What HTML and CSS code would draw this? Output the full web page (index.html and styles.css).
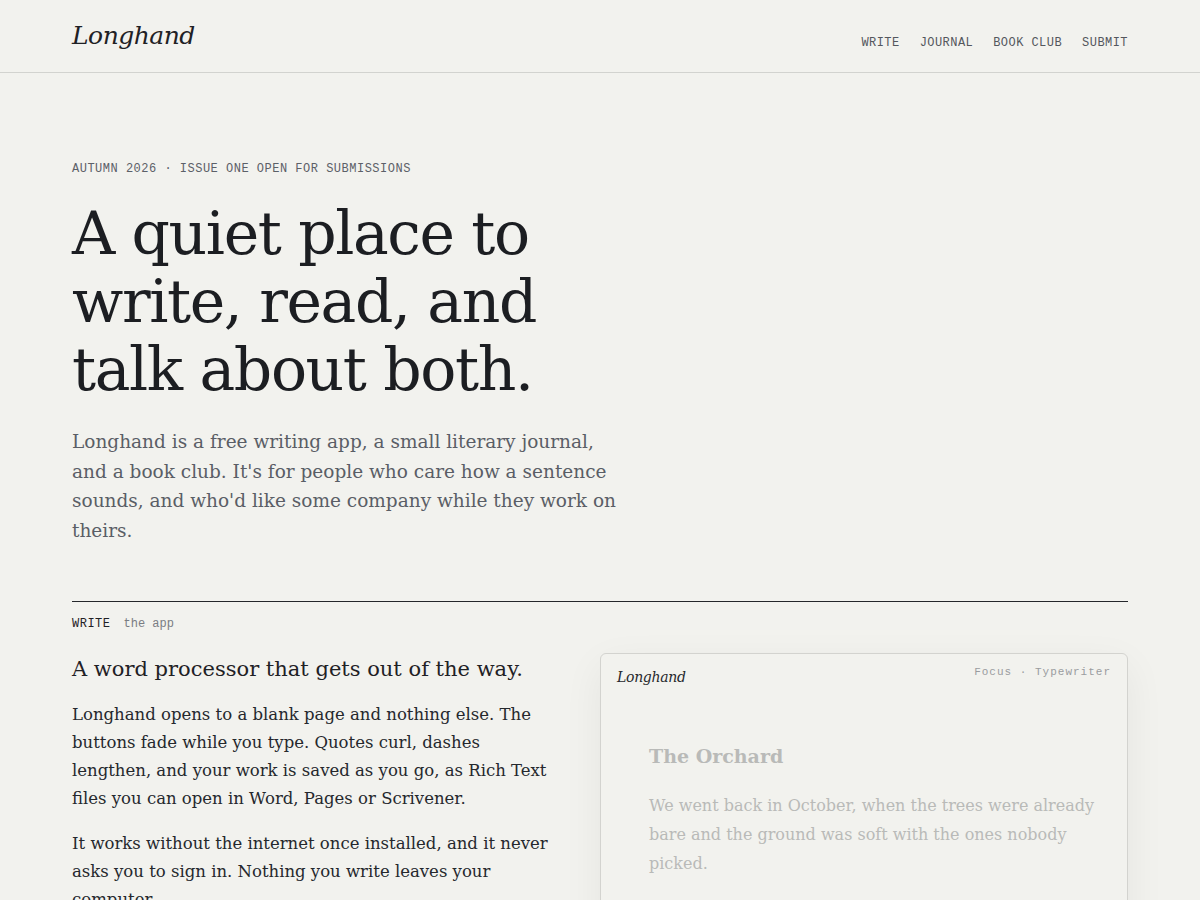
FILE: index.html
```html
<!DOCTYPE html>
<html lang="en">
<head>
<meta charset="utf-8">
<title>Longhand</title>
<link rel="stylesheet" href="styles.css">
</head>
<body>
<header class="site-header">
  <div class="wrap header-inner">
    <a class="logo" href="#">Longhand</a>
    <nav class="nav">
      <a href="#">Write</a>
      <a href="#">Journal</a>
      <a href="#">Book club</a>
      <a href="#">Submit</a>
    </nav>
  </div>
</header>
<main class="wrap">
  <section class="hero">
    <p class="eyebrow">Autumn 2026 · Issue one open for submissions</p>
    <h1 class="hero-title">A quiet place to write, read, and talk about both.</h1>
    <p class="hero-lede">Longhand is a free writing app, a small literary journal, and a book club. It's for people who care how a sentence sounds, and who'd like some company while they work on theirs.</p>
  </section>
  <section class="section">
    <div class="section-label"><span class="label-main">Write</span><span class="label-sub">the app</span></div>
    <div class="section-grid">
      <div class="section-copy">
        <h2 class="section-title">A word processor that gets out of the way.</h2>
        <p>Longhand opens to a blank page and nothing else. The buttons fade while you type. Quotes curl, dashes lengthen, and your work is saved as you go, as Rich Text files you can open in Word, Pages or Scrivener.</p>
        <p>It works without the internet once installed, and it never asks you to sign in. Nothing you write leaves your computer.</p>
      </div>
      <div class="app-card">
        <div class="app-bar">
          <span class="app-logo">Longhand</span>
          <span class="app-modes">Focus · Typewriter</span>
        </div>
        <div class="app-page">
          <h3 class="doc-title">The Orchard</h3>
          <p class="doc-text">We went back in October, when the trees were already bare and the ground was soft with the ones nobody picked.</p>
        </div>
      </div>
    </div>
  </section>
</main>
</body>
</html>
```
FILE: styles.css
```css
* { box-sizing: border-box; }
html, body { margin: 0; padding: 0; }
body {
  background: #f2f2ee;
  color: #1f2125;
  font-family: "DejaVu Serif", "Liberation Serif", serif;
}
a { color: inherit; text-decoration: none; }
.wrap { max-width: 1056px; margin: 0 auto; }

.site-header { border-bottom: 1px solid #d2d3cf; }
.header-inner {
  height: 72px;
  display: flex;
  align-items: center;
  justify-content: space-between;
}
.logo {
  font-style: italic;
  font-size: 25px;
  letter-spacing: -0.5px;
  color: #1f2125;
  margin-top: -1px;
}
.nav { display: flex; gap: 20px; margin-top: 14px; }
.nav a {
  font-family: "Liberation Mono", "DejaVu Sans Mono", monospace;
  font-size: 12px;
  letter-spacing: 0.45px;
  text-transform: uppercase;
  color: #54575d;
}

.hero { padding-top: 88px; }
.eyebrow {
  margin: 0;
  font-family: "Liberation Mono", "DejaVu Sans Mono", monospace;
  font-size: 12px;
  line-height: 16px;
  letter-spacing: 0.5px;
  text-transform: uppercase;
  color: #5c6068;
}
.hero-title {
  margin: 22px 0 0;
  font-weight: 400;
  font-size: 60px;
  line-height: 68px;
  letter-spacing: -1.4px;
  max-width: 560px;
  color: #1c1e22;
}
.hero-lede {
  margin: 24px 0 0;
  max-width: 550px;
  font-size: 18.5px;
  line-height: 29.5px;
  color: #5a5e66;
}

.section {
  margin-top: 56px;
  border-top: 1px solid #25272b;
}
.section-label {
  display: flex;
  align-items: baseline;
  gap: 13px;
  padding-top: 15px;
  font-family: "Liberation Mono", "DejaVu Sans Mono", monospace;
}
.label-main {
  font-size: 12px;
  letter-spacing: 0.5px;
  text-transform: uppercase;
  color: #1f2125;
}
.label-sub { font-size: 12px; color: #7a7d83; }

.section-grid {
  display: grid;
  grid-template-columns: 1fr 1fr;
  margin-top: 22px;
}
.section-copy { padding-right: 48px; }
.section-title {
  margin: 0;
  font-weight: 400;
  font-size: 21px;
  line-height: 32px;
  color: #1f2125;
}
.section-copy p {
  margin: 16px 0 0;
  font-size: 16.5px;
  line-height: 28px;
  color: #25282d;
}
.section-copy p + p { margin-top: 17px; }

.app-card {
  border: 1px solid #d3d3cf;
  border-radius: 6px;
  background: #f2f2ee;
  box-shadow: 0 12px 40px rgba(0, 0, 0, 0.06);
  min-height: 300px;
}
.app-bar {
  display: flex;
  justify-content: space-between;
  align-items: flex-start;
  padding: 12px 16px 0;
}
.app-logo { font-style: italic; font-size: 14px; letter-spacing: -0.3px; color: #26282c; padding-top: 3px; }
.app-modes {
  font-family: "Liberation Mono", "DejaVu Sans Mono", monospace;
  font-size: 11px;
  letter-spacing: 1px;
  color: #9a9c9f;
}
.app-page { padding: 56px 32px 0 48px; }
.doc-title {
  margin: 0;
  font-size: 19px;
  line-height: 30px;
  font-weight: 700;
  color: #b9bab8;
}
.doc-text {
  margin: 20px 0 0;
  font-size: 16px;
  line-height: 29px;
  color: #b9bab8;
}
```
